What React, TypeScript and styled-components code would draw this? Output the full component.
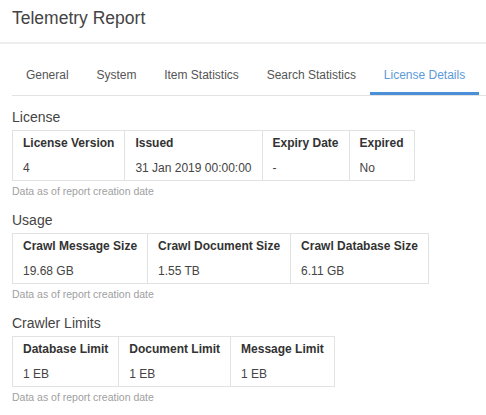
import React from "react";
import styled, { createGlobalStyle } from "styled-components";

const GlobalStyle = createGlobalStyle`
  html, body {
    margin: 0;
    padding: 0;
    background: #ffffff;
  }
  body {
    font-family: "Liberation Sans", Arial, sans-serif;
    color: #333333;
  }
`;

const Page = styled.div`
  width: 486px;
  min-height: 415px;
  background: #fff;
`;

const Header = styled.header`
  height: 44px;
  box-sizing: border-box;
  padding: 5px 12px 0;
  border-bottom: 2px solid #eeeeee;
`;

const Title = styled.h1`
  margin: 0;
  font-size: 17.5px;
  line-height: 26px;
  font-weight: normal;
  color: #444444;
`;

const TabBar = styled.nav`
  display: flex;
  margin: 9px 0 0 12px;
  border-bottom: 1px solid #e3e3e3;
`;

const Tab = styled.div<{ $active?: boolean }>`
  padding: 14px 13.9px 8px;
  font-size: 12px;
  line-height: 17px;
  color: ${(p) => (p.$active ? "#5b9ad8" : "#555555")};
  border-bottom: 3px solid ${(p) => (p.$active ? "#4a8fd8" : "transparent")};
  white-space: nowrap;
`;

const Content = styled.main`
  display: flex;
  flex-direction: column;
  gap: 11px;
  padding: 11px 12px 0;
`;

const Section = styled.section`
  display: flex;
  flex-direction: column;
  align-items: flex-start;
`;

const SectionTitle = styled.h2`
  margin: 0 0 3px;
  font-size: 14px;
  line-height: 20px;
  font-weight: normal;
  color: #444444;
`;

const Table = styled.table`
  border-collapse: collapse;
  border: 1px solid #e2e2e2;
  font-size: 12px;
`;

const Th = styled.th`
  padding: 4px 10px;
  line-height: 16px;
  text-align: left;
  font-weight: bold;
  color: #333333;
  border-left: 1px solid #e2e2e2;
  white-space: nowrap;
`;

const Td = styled.td`
  padding: 5px 10px 4px;
  line-height: 16px;
  color: #444444;
  border-left: 1px solid #e2e2e2;
  white-space: nowrap;
`;

const Caption = styled.div`
  margin-top: 3px;
  font-size: 10.5px;
  line-height: 15px;
  color: #a0a0a0;
`;

type Block = { title: string; headers: string[]; values: string[] };

const blocks: Block[] = [
  {
    title: "License",
    headers: ["License Version", "Issued", "Expiry Date", "Expired"],
    values: ["4", "31 Jan 2019 00:00:00", "-", "No"],
  },
  {
    title: "Usage",
    headers: ["Crawl Message Size", "Crawl Document Size", "Crawl Database Size"],
    values: ["19.68 GB", "1.55 TB", "6.11 GB"],
  },
  {
    title: "Crawler Limits",
    headers: ["Database Limit", "Document Limit", "Message Limit"],
    values: ["1 EB", "1 EB", "1 EB"],
  },
];

const tabs = ["General", "System", "Item Statistics", "Search Statistics", "License Details"];

export default function App() {
  return (
    <Page>
      <GlobalStyle />
      <Header>
        <Title>Telemetry Report</Title>
      </Header>
      <TabBar>
        {tabs.map((t) => (
          <Tab key={t} $active={t === "License Details"}>
            {t}
          </Tab>
        ))}
      </TabBar>
      <Content>
        {blocks.map((b) => (
          <Section key={b.title}>
            <SectionTitle>{b.title}</SectionTitle>
            <Table>
              <thead>
                <tr>
                  {b.headers.map((h) => (
                    <Th key={h}>{h}</Th>
                  ))}
                </tr>
              </thead>
              <tbody>
                <tr>
                  {b.values.map((v, i) => (
                    <Td key={i}>{v}</Td>
                  ))}
                </tr>
              </tbody>
            </Table>
            <Caption>Data as of report creation date</Caption>
          </Section>
        ))}
      </Content>
    </Page>
  );
}
